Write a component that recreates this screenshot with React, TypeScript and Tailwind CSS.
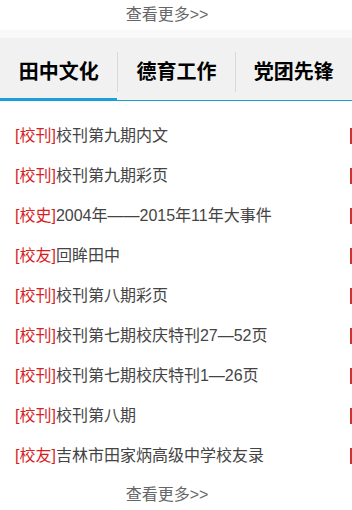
const tabs = ['田中文化', '德育工作', '党团先锋'];

const items = [
  { tag: '校刊', title: '校刊第九期内文' },
  { tag: '校刊', title: '校刊第九期彩页' },
  { tag: '校史', title: '2004年——2015年11年大事件' },
  { tag: '校友', title: '回眸田中' },
  { tag: '校刊', title: '校刊第八期彩页' },
  { tag: '校刊', title: '校刊第七期校庆特刊27—52页' },
  { tag: '校刊', title: '校刊第七期校庆特刊1—26页' },
  { tag: '校刊', title: '校刊第八期' },
  { tag: '校友', title: '吉林市田家炳高级中学校友录' },
];

function MoreLink() {
  return (
    <div className="flex h-[30px] items-center justify-center pr-[18px] text-[16px] leading-none text-[#666]">
      查看更多&gt;&gt;
    </div>
  );
}

export default function App() {
  return (
    <div
      className="h-[510px] w-[352px] overflow-hidden bg-white"
      style={{ fontFamily: '"Liberation Sans", "Noto Sans CJK SC", sans-serif' }}
    >
      <MoreLink />

      <div className="h-[8px] bg-[#f9f9f9]" />

      <div className="flex border-b border-[#1b9fdb] bg-[#f1f1f1]">
        {tabs.map((t, i) => (
          <div
            key={t}
            className={
              i === 0
                ? 'flex-1 -mb-px border-b-[3px] border-[#1b9fdb] pt-[14px] pb-[6px]'
                : 'flex-1 -mb-px border-b-[3px] border-transparent pt-[14px] pb-[6px]'
            }
          >
            <div
              className={
                i === 0
                  ? 'flex h-[40px] items-center justify-center text-[20px] font-bold leading-none text-black'
                  : 'flex h-[40px] items-center justify-center border-l border-[#d9d9d9] text-[20px] font-bold leading-none text-black'
              }
            >
              {t}
            </div>
          </div>
        ))}
      </div>

      <ul className="pt-[15px]">
        {items.map((it, i) => (
          <li key={i} className="flex h-[40px] items-center justify-between pl-[15px]">
            <span className="text-[16px] leading-none text-[#444]">
              <span className="text-[#d81e1e]">[{it.tag}]</span>
              {it.title}
            </span>
            <span className="h-[16px] w-[2px] bg-[#c33]" />
          </li>
        ))}
      </ul>

      <div className="h-[4px]" />
      <MoreLink />
    </div>
  );
}
